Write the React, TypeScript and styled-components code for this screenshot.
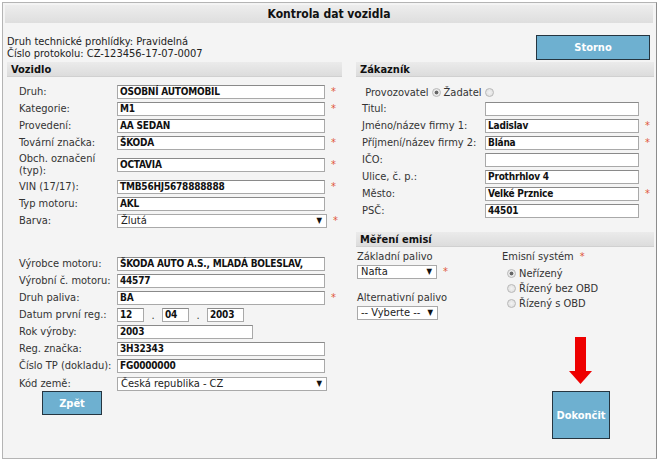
import React from "react";
import styled, { createGlobalStyle } from "styled-components";

const Global = createGlobalStyle`
  html, body { margin: 0; padding: 0; background: #ffffff; }
  body { font-family: "DejaVu Sans Condensed", "DejaVu Sans", sans-serif; font-size: 11px; color: #333; }
`;

const Frame = styled.div`
  margin: 2px 0 0 2px;
  width: 655px;
  height: 457px;
  border: 1px solid #b4b4b4;
  border-right-color: #8c8c8c;
  background: #f4f4f4;
  padding: 2px 3px 0 2px;
  box-sizing: border-box;
  display: flex;
  flex-direction: column;
`;

const TitleBar = styled.div`
  height: 18px;
  background: linear-gradient(#ededed, #dedede);
  display: flex;
  align-items: center;
  justify-content: center;
  font-weight: bold;
  font-size: 12px;
  color: #111;
`;

const InfoRow = styled.div`
  display: flex;
  justify-content: space-between;
  align-items: flex-end;
  padding: 12px 3px 2px 2px;
`;

const InfoText = styled.div`
  line-height: 12px;
  color: #222;
`;

const ActionButton = styled.button<{ w: number; h: number }>`
  width: ${(p) => p.w}px;
  height: ${(p) => p.h}px;
  background: #6eb0d0;
  border: 1px solid #253540;
  color: #ffffff;
  font-family: inherit;
  font-weight: bold;
  font-size: 11px;
  padding: 0;
  cursor: pointer;
`;

const Columns = styled.div`
  display: grid;
  grid-template-columns: 335px 298px;
  column-gap: 14px;
  padding-left: 2px;
  flex: 1;
`;

const Column = styled.div`
  display: flex;
  flex-direction: column;
`;

const SectionHeader = styled.div<{ mt?: number }>`
  height: 15px;
  margin-top: ${(p) => p.mt || 0}px;
  background: linear-gradient(#ebebeb, #dcdcdc);
  border-bottom: 1px solid #d0d0d0;
  box-sizing: border-box;
  font-weight: bold;
  color: #111;
  padding-left: 4px;
  display: flex;
  align-items: center;
`;

const FormBody = styled.div<{ pl: number; pt: number }>`
  padding: ${(p) => p.pt}px 0 0 ${(p) => p.pl}px;
  display: flex;
  flex-direction: column;
  gap: 3px;
`;

const Row = styled.div<{ label: number; mt?: number }>`
  display: grid;
  grid-template-columns: ${(p) => p.label}px auto auto;
  justify-content: start;
  align-items: center;
  min-height: 14px;
  margin-top: ${(p) => p.mt || 0}px;
`;

const Label = styled.div`
  line-height: 12px;
  color: #333;
`;

const TextBox = styled.div<{ w: number }>`
  width: ${(p) => p.w}px;
  height: 14px;
  box-sizing: border-box;
  background: #fff;
  border: 1px solid #a9a9a9;
  border-top-color: #8a8a8a;
  font-weight: bold;
  font-size: 10px;
  letter-spacing: -0.2px;
  color: #111;
  line-height: 12px;
  padding-left: 2px;
  white-space: nowrap;
`;

const Select = styled.div<{ w: number }>`
  width: ${(p) => p.w}px;
  height: 14px;
  box-sizing: border-box;
  background: #fff;
  border: 1px solid #a9a9a9;
  color: #222;
  line-height: 12px;
  padding: 0 4px 0 3px;
  display: flex;
  justify-content: space-between;
  align-items: center;
`;

const Arrow = styled.span`
  font-size: 8px;
  color: #111;
`;

const Req = styled.span`
  color: #e0553a;
  font-size: 11px;
  margin-left: 6px;
  line-height: 10px;
`;

const DateGroup = styled.div`
  display: flex;
  align-items: center;
`;

const Dot = styled.span`
  width: 18px;
  text-align: center;
  color: #333;
`;

const BackWrap = styled.div`
  padding: 0 0 0 35px;
`;

const RadioLine = styled.div`
  display: flex;
  align-items: center;
  gap: 3px;
  color: #333;
  height: 14px;
`;

const RadioDot = styled.span<{ on?: boolean }>`
  width: 9px;
  height: 9px;
  border-radius: 50%;
  box-sizing: border-box;
  border: 1px solid #b8b8b8;
  background: ${(p) =>
    p.on
      ? "radial-gradient(circle, #666 0 1.6px, #e4e4e4 2.2px, #f6f6f6 100%)"
      : "radial-gradient(circle, #f2f2f2 0, #dcdcdc 100%)"};
  display: inline-block;
`;

const EmiseBody = styled.div`
  display: grid;
  grid-template-columns: 145px auto;
  padding: 4px 0 0 1px;
`;

const EmiseCol = styled.div`
  display: flex;
  flex-direction: column;
`;

const FieldTitle = styled.div<{ mt?: number }>`
  line-height: 12px;
  color: #333;
  margin-top: ${(p) => p.mt || 0}px;
`;

const InlineField = styled.div`
  display: flex;
  align-items: center;
  margin-top: 2px;
`;

const RadioList = styled.div`
  display: flex;
  flex-direction: column;
  padding: 3px 0 0 5px;
  gap: 1px;
`;

const FinishArea = styled.div`
  display: flex;
  flex-direction: column;
  align-items: center;
  width: 60px;
  margin: 17px 0 0 195px;
  gap: 6px;
`;

function Field({
  label,
  value,
  w = 208,
  req,
  labelW = 98,
  mt,
}: {
  label: React.ReactNode;
  value: string;
  w?: number;
  req?: boolean;
  labelW?: number;
  mt?: number;
}) {
  return (
    <Row label={labelW} mt={mt}>
      <Label>{label}</Label>
      <TextBox w={w}>{value}</TextBox>
      {req ? <Req>*</Req> : <span />}
    </Row>
  );
}

export default function App() {
  return (
    <>
      <Global />
      <Frame>
        <TitleBar>Kontrola dat vozidla</TitleBar>
        <InfoRow>
          <InfoText>
            Druh technické prohlídky: Pravidelná
            <br />
            Číslo protokolu: CZ-123456-17-07-0007
          </InfoText>
          <ActionButton w={114} h={25}>Storno</ActionButton>
        </InfoRow>
        <Columns>
          <Column>
            <SectionHeader>Vozidlo</SectionHeader>
            <FormBody pl={12} pt={8}>
              <Field label="Druh:" value="OSOBNÍ AUTOMOBIL" req />
              <Field label="Kategorie:" value="M1" req />
              <Field label="Provedení:" value="AA SEDAN" />
              <Field label="Tovární značka:" value="ŠKODA" req />
              <Field label={<>Obch. označení<br />(typ):</>} value="OCTAVIA" req />
              <Field label="VIN (17/17):" value="TMB56HJ5678888888" req />
              <Field label="Typ motoru:" value="AKL" />
              <Row label={98}>
                <Label>Barva:</Label>
                <Select w={210}>
                  <span>Žlutá</span>
                  <Arrow>▼</Arrow>
                </Select>
                <Req>*</Req>
              </Row>
              <Field label="Výrobce motoru:" value="ŠKODA AUTO A.S., MLADÁ BOLESLAV," mt={26} />
              <Field label="Výrobní č. motoru:" value="44577" />
              <Field label="Druh paliva:" value="BA" req />
              <Row label={98}>
                <Label>Datum první reg.:</Label>
                <DateGroup>
                  <TextBox w={27}>12</TextBox>
                  <Dot>.</Dot>
                  <TextBox w={27}>04</TextBox>
                  <Dot>.</Dot>
                  <TextBox w={37}>2003</TextBox>
                </DateGroup>
                <span />
              </Row>
              <Field label="Rok výroby:" value="2003" w={136} />
              <Field label="Reg. značka:" value="3H32343" />
              <Field label="Číslo TP (dokladu):" value="FG0000000" />
              <Row label={98} mt={1}>
                <Label>Kód země:</Label>
                <Select w={210}>
                  <span>Česká republika - CZ</span>
                  <Arrow>▼</Arrow>
                </Select>
                <span />
              </Row>
            </FormBody>
            <BackWrap>
              <ActionButton w={60} h={24}>Zpět</ActionButton>
            </BackWrap>
          </Column>
          <Column>
            <SectionHeader>Zákazník</SectionHeader>
            <FormBody pl={6} pt={8}>
              <RadioLine>
                <span>&nbsp;Provozovatel</span>
                <RadioDot on />
                <span>Žadatel</span>
                <RadioDot />
              </RadioLine>
              <Field label="Titul:" value="" w={154} labelW={123} />
              <Field label="Jméno/název firmy 1:" value="Ladislav" w={154} labelW={123} req />
              <Field label="Příjmení/název firmy 2:" value="Blána" w={154} labelW={123} req />
              <Field label="IČO:" value="" w={154} labelW={123} />
              <Field label="Ulice, č. p.:" value="Prothrhlov 4" w={154} labelW={123} />
              <Field label="Město:" value="Velké Prznice" w={154} labelW={123} req />
              <Field label="PSČ:" value="44501" w={154} labelW={123} />
            </FormBody>
            <SectionHeader mt={14}>Měření emisí</SectionHeader>
            <EmiseBody>
              <EmiseCol>
                <FieldTitle>Základní palivo</FieldTitle>
                <InlineField>
                  <Select w={80}>
                    <span>Nafta</span>
                    <Arrow>▼</Arrow>
                  </Select>
                  <Req>*</Req>
                </InlineField>
                <FieldTitle mt={13}>Alternativní palivo</FieldTitle>
                <InlineField>
                  <Select w={81}>
                    <span>-- Vyberte --</span>
                    <Arrow>▼</Arrow>
                  </Select>
                </InlineField>
              </EmiseCol>
              <EmiseCol>
                <FieldTitle>
                  Emisní systém<Req>*</Req>
                </FieldTitle>
                <RadioList>
                  <RadioLine>
                    <RadioDot on />
                    <span>Neřízený</span>
                  </RadioLine>
                  <RadioLine>
                    <RadioDot />
                    <span>Řízený bez OBD</span>
                  </RadioLine>
                  <RadioLine>
                    <RadioDot />
                    <span>Řízený s OBD</span>
                  </RadioLine>
                </RadioList>
              </EmiseCol>
            </EmiseBody>
            <FinishArea>
              <svg width="24" height="48" viewBox="0 0 24 48">
                <rect x="6" y="0" width="11" height="35" fill="#ee0000" />
                <polygon points="0,34 23,34 11.5,47" fill="#ee0000" />
              </svg>
              <ActionButton w={58} h={48}>Dokončit</ActionButton>
            </FinishArea>
          </Column>
        </Columns>
      </Frame>
    </>
  );
}
